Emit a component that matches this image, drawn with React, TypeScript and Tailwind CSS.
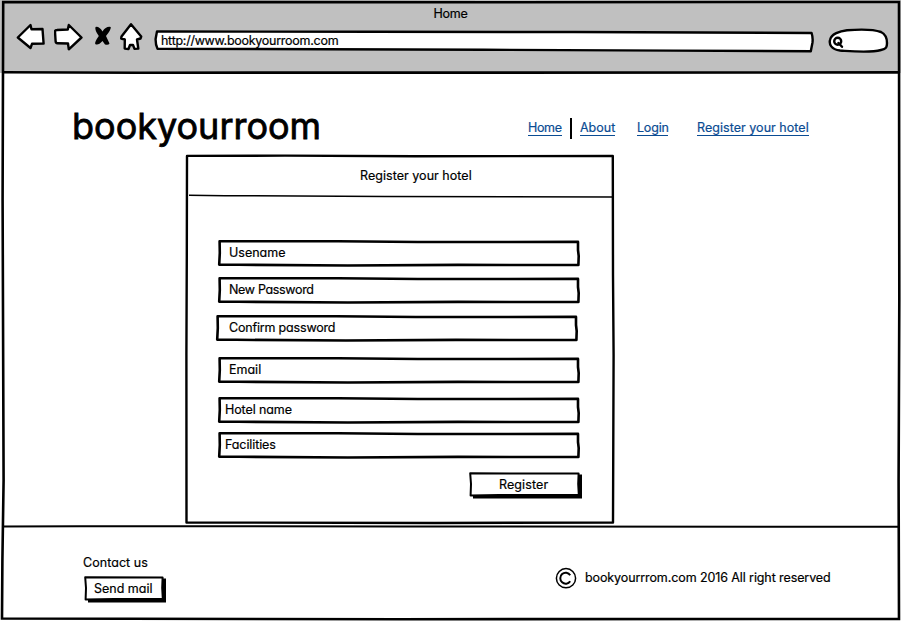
import React from "react";

const ink = {
  fill: "white",
  stroke: "black",
  strokeWidth: 2.6,
  strokeLinejoin: "round" as const,
  strokeLinecap: "round" as const,
};

function Sketch({ w, h, children }: { w: number; h: number; children: React.ReactNode }) {
  return (
    <svg className="pointer-events-none absolute left-0 top-0 overflow-visible" width={w} height={h} viewBox={`0 0 ${w} ${h}`}>
      {children}
    </svg>
  );
}

function Field({ label, className }: { label: string; className: string }) {
  return (
    <div className={`relative flex h-[27px] w-[362px] shrink-0 items-center pb-[2px] ${className}`}>
      <Sketch w={362} h={27}>
        <path {...ink} d="M1.6 1.3 L120 1.3 L200 2 L360 1.9 L360 10 L360.7 16 L360.4 25 L240 24.9 L130 25.5 L20 24.8 L1.2 24.6 L1.8 13 Z" />
      </Sketch>
      <span className="relative">{label}</span>
    </div>
  );
}

function SketchButton({ label, w, className }: { label: string; w: number; className: string }) {
  return (
    <button className={`relative flex h-[27px] shrink-0 items-center pb-[2px] ${className}`}>
      <Sketch w={w} h={27}>
        <path d={`M4 3 L${w} 2.5 L${w} 26.5 L4 26.5 Z`} fill="black" />
        <path {...ink} strokeWidth={2} d={`M1.2 1.3 L${w - 3.4} 1.6 L${w - 3.8} 12 L${w - 3.2} 22.8 L30 23 L1.6 23.6 L2 12 Z`} />
      </Sketch>
      <span className="relative">{label}</span>
    </button>
  );
}

function Toolbar() {
  return (
    <header className="relative h-[73px] shrink-0 bg-[#c0c0c0]">
      <div className="flex h-[23px] items-end justify-center leading-[18px]">
        <span className="tracking-[-0.2px]">Home</span>
      </div>
      <div className="flex h-[30px] items-start pl-[16px]">
        <svg width="38" height="28" viewBox="16 23 38 28">
          <path {...ink} strokeWidth={2.4} d="M17.8 37.5 L30.5 25 L31.5 29.2 L42.5 29 L43.6 43.5 L32 43.8 L30.5 48 Z" />
        </svg>
        <svg width="40" height="28" viewBox="54 23 40 28">
          <path {...ink} strokeWidth={2.4} d="M55 31.5 Q55 30 57 30 L67.8 29.5 L68.8 25 L81.5 37.5 L68.8 49.3 L68 43.5 L57.5 43.2 Q55.6 43.2 55.6 41 Z" />
        </svg>
        <svg width="24" height="28" viewBox="94 23 24 28">
          <path d="M95.5 27 Q99 26 102.5 31.5 Q106 26 110.8 27 Q111 30 106 36 L109.5 43.5 Q108.5 45.5 105 44.5 L102.5 41 Q98 46 95.2 44 Q94.5 42 98.8 36 Q94.5 30 95.5 27 Z" />
        </svg>
        <svg width="36" height="28" viewBox="118 23 36 28">
          <path {...ink} strokeWidth={2.4} d="M131 24.3 L141.2 36.5 L140.5 38.5 L137 39.5 L138.3 48.6 L134.5 48.9 L133 45 L130 45 L128.5 49 L124.7 48.6 L124.8 39.5 L121.2 38.5 L121.5 36.5 Z" />
        </svg>
        <div className="relative mt-[7px] flex h-[22px] w-[660px] items-center pb-[1px] pl-[7px]">
          <Sketch w={660} h={22}>
            <path {...ink} strokeWidth={2.4} d="M3 1.4 L220 1.8 L420 2 L657.6 3 Q659.2 8 658.4 13 L656.8 21.2 L520 20.6 L330 19.8 L170 19.2 L3.5 18.8 Q1.5 15 1.6 9 Z" />
          </Sketch>
          <span className="relative tracking-[-0.27px]">http://www.bookyourroom.com</span>
        </div>
        <svg width="62" height="30" viewBox="828 23 62 30" className="ml-[14px]">
          <path {...ink} strokeWidth={2.4} d="M840 50.5 C831 49.5 829 44 830 40 C831 34 840 31 847 30.2 C860 29.2 875 29.8 881 32 C886 34.5 887 40 887 43 C887 47 886.5 49 881 50 C870 53 855 51.5 840 50.5 Z" />
          <circle cx="837.7" cy="41.3" r="3.5" fill="white" stroke="black" strokeWidth="2.4" />
          <path d="M838.5 43 L842 46.8" stroke="black" strokeWidth="2.4" strokeLinecap="round" />
        </svg>
      </div>
    </header>
  );
}

function NavLink({ label, className }: { label: string; className: string }) {
  return (
    <a className={`block h-[15px] whitespace-nowrap border-b border-[#0b4c93] leading-[14px] text-[#0b4c93] ${className}`}>
      {label}
    </a>
  );
}

export default function App() {
  return (
    <div className="relative flex h-[621px] w-[901px] flex-col overflow-hidden bg-white font-['Inter','Open_Sans',sans-serif] text-[12.5px] leading-[18px] text-black [-webkit-text-stroke:0.2px] [font-feature-settings:'cv11'] whitespace-nowrap">
      <Toolbar />

      <div className="flex h-[82px] shrink-0 items-start pl-[72px]">
        <h1 className="mt-[31px] w-[456px] text-[36px] leading-[44px] [-webkit-text-stroke:0.8px]">bookyourroom</h1>
        <nav className="mt-[45px] flex items-center">
          <NavLink label="Home" className="w-[34px] tracking-[-0.35px]" />
          <span className="ml-[8px] h-[21px] w-[2px] bg-black" />
          <NavLink label="About" className="ml-[8px] w-[35px]" />
          <NavLink label="Login" className="ml-[22px] w-[31px] tracking-[-0.2px]" />
          <NavLink label="Register your hotel" className="ml-[29px] w-[112px] tracking-[0.04px]" />
        </nav>
      </div>

      <main className="relative ml-[185px] flex h-[369px] w-[430px] shrink-0 flex-col">
        <Sketch w={430} h={369}>
          <path {...ink} strokeWidth={2.4} d="M2 .9 L100 .6 L230 1.2 L427.8 1 L428 120 L428.6 200 L428 367.5 L250 368 L1.5 367.5 L1.4 200 L1.8 100 Z" />
          <path d="M4 40.3 L40 40.7 L200 41.5 L428 42" fill="none" stroke="black" strokeWidth="1.5" />
        </Sketch>
        <h2 className="relative h-[42px] pl-[175px] pt-[12px] tracking-[0.04px]">Register your hotel</h2>
        <div className="relative flex flex-col pl-[33px] pt-[43px]">
          <Field label="Usename" className="pl-[11px]" />
          <Field label="New Password" className="mt-[10px] pl-[11px] tracking-[-0.33px]" />
          <Field label="Confirm password" className="-ml-[2px] mt-[11px] pl-[13px] tracking-[-0.18px]" />
          <Field label="Email" className="mt-[15px] pl-[11px]" />
          <Field label="Hotel name" className="mt-[13px] pl-[7px] tracking-[-0.1px]" />
          <Field label="Facilities" className="mt-[8px] pl-[7px] tracking-[-0.1px]" />
          <SketchButton label="Register" w={113} className="ml-[251px] mt-[13px] w-[113px] pl-[30px] tracking-[0.1px]" />
        </div>
      </main>

      <footer className="flex h-[97px] shrink-0 pl-[83px] pt-[30px]">
        <div className="flex w-[472px] flex-col items-start">
          <span className="tracking-[0.05px]">Contact us</span>
          <SketchButton label="Send mail" w={82} className="ml-px mt-[4px] w-[82px] pl-[10px]" />
        </div>
        <div className="mt-[13px] flex h-[22px] items-center">
          <svg width="22" height="22" viewBox="0 0 22 22" fill="none" stroke="black">
            <circle cx="11" cy="11.2" r="9.6" strokeWidth="1.5" />
            <path d="M15.2 8.2 A5.4 5.5 0 1 0 15.2 14.2" strokeWidth="2" />
          </svg>
          <span className="ml-[8px] tracking-[-0.1px]">bookyourrrom.com 2016 All right reserved</span>
        </div>
      </footer>

      <Sketch w={901} h={621}>
        <g fill="none" stroke="black" strokeWidth="2.6">
          <path d="M3.2 2 L500 2.2 L899 2 L899.3 300 L898.6 480 L899 619 L400 619.2 L2 618.5 L2.4 560 L3.6 480 L2.6 200 Z" />
          <path d="M3 72.2 L140 72.7 L500 72.6 L899 72.4" />
          <path d="M2 526.4 L80 526.2 L400 526.4 L899 526.8" strokeWidth="2" />
        </g>
      </Sketch>
    </div>
  );
}
